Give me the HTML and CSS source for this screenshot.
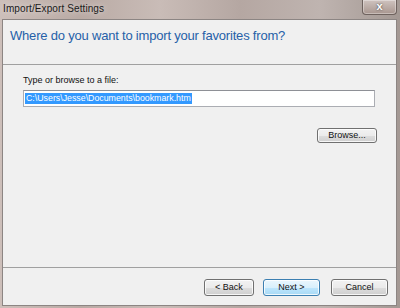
FILE: index.html
```html
<!DOCTYPE html>
<html>
<head>
<meta charset="utf-8">
<link rel="stylesheet" href="styles.css">
</head>
<body>
<div class="window">
  <div class="titlebar">
    <span class="title">Import/Export Settings</span>
    <div class="close">x</div>
  </div>
  <div class="panel">
    <div class="header">
      <h1 class="heading">Where do you want to import your favorites from?</h1>
    </div>
    <div class="body">
      <div class="label">Type or browse to a file:</div>
      <div class="input"><span class="sel">C:\Users\Jesse\Documents\bookmark.htm</span></div>
      <div class="browse-row"><div class="btn browse">Browse...</div></div>
    </div>
    <div class="footer">
      <div class="btn back">&lt; Back</div>
      <div class="btn next">Next &gt;</div>
      <div class="btn cancel">Cancel</div>
    </div>
  </div>
</div>
</body>
</html>
```
FILE: styles.css
```css
html, body {
  margin: 0;
  padding: 0;
  width: 400px;
  height: 308px;
  overflow: hidden;
  background: #c8bdb8;
}
.window {
  width: 400px;
  height: 308px;
  display: flex;
  flex-direction: column;
  background: linear-gradient(90deg, #cdbfba 0%, #b9aaa4 20%, #c9bcb7 40%, #b5a7a2 60%, #bfb4b0 80%, #a39893 100%);
  font-family: "Liberation Sans", Arial, sans-serif;
  box-sizing: border-box;
}
.titlebar {
  height: 19px;
  display: flex;
  align-items: flex-start;
  padding-left: 3px;
}
.title {
  font-size: 10px;
  color: #1a1a1a;
  line-height: 17px;
  letter-spacing: 0.1px;
  text-shadow: 0 0 6px rgba(255,255,255,0.7);
}
.close {
  margin-left: auto;
  margin-right: 3px;
  width: 35px;
  height: 15px;
  box-sizing: border-box;
  border: 1px solid #6e625e;
  border-top: none;
  border-radius: 0 0 4px 4px;
  background: linear-gradient(#cfc3bf, #a8968f);
  box-shadow: inset 0 0 0 1px rgba(255,255,255,0.35);
  color: #fff;
  font-weight: bold;
  font-size: 11px;
  line-height: 12px;
  text-align: center;
  text-shadow: 0 0 2px #333;
}
.panel {
  flex: 1;
  margin: 0 3px 2px 2px;
  border: 1px solid #8c8583;
  background: #f0f0f0;
  display: flex;
  flex-direction: column;
}
.header {
  height: 45px;
  border-bottom: 1px solid #a0a0a0;
  padding-left: 7px;
  box-sizing: border-box;
}
.heading {
  margin: 0;
  font-weight: normal;
  font-size: 13px;
  letter-spacing: -0.2px;
  color: #2660a8;
  padding-top: 7px;
  line-height: 18px;
}
.body {
  flex: 1;
  padding: 9px 21px 0 20px;
  font-size: 9px;
  color: #111;
}
.label {
  line-height: 13px;
  margin-bottom: 3px;
}
.input {
  height: 17px;
  box-sizing: border-box;
  border: 1px solid #abadb3;
  border-top-color: #8e9096;
  background: #fff;
  padding: 2px 1px;
  line-height: 11px;
}
.sel {
  background: #3399ff;
  color: #fff;
  display: inline-block;
  padding: 0 1px;
  font-size: 8.8px;
}
.browse-row {
  display: flex;
  justify-content: flex-end;
  margin-top: 21px;
  margin-right: -2px;
}
.btn {
  height: 15px;
  box-sizing: border-box;
  border: 1px solid #707070;
  border-radius: 3px;
  background: linear-gradient(#f2f2f2 0%, #ebebeb 50%, #dddddd 51%, #cfcfcf 100%);
  box-shadow: inset 0 0 0 1px rgba(255,255,255,0.8);
  font-size: 9px;
  line-height: 13px;
  text-align: center;
  color: #111;
}
.browse {
  width: 60px;
}
.footer {
  height: 38px;
  border-top: 1px solid #a0a0a0;
  box-sizing: border-box;
  display: flex;
  align-items: flex-start;
  padding-top: 11px;
  padding-left: 201px;
}
.back {
  width: 50px;
  height: 17px;
  line-height: 15px;
}
.next {
  width: 57px;
  height: 17px;
  line-height: 15px;
  margin-left: 9px;
  border-color: #3c7fb1;
  background: linear-gradient(#eaf6fd 0%, #d9f0fc 50%, #bee6fd 51%, #a7d9f5 100%);
}
.cancel {
  width: 57px;
  height: 17px;
  line-height: 15px;
  margin-left: 11px;
}
```
